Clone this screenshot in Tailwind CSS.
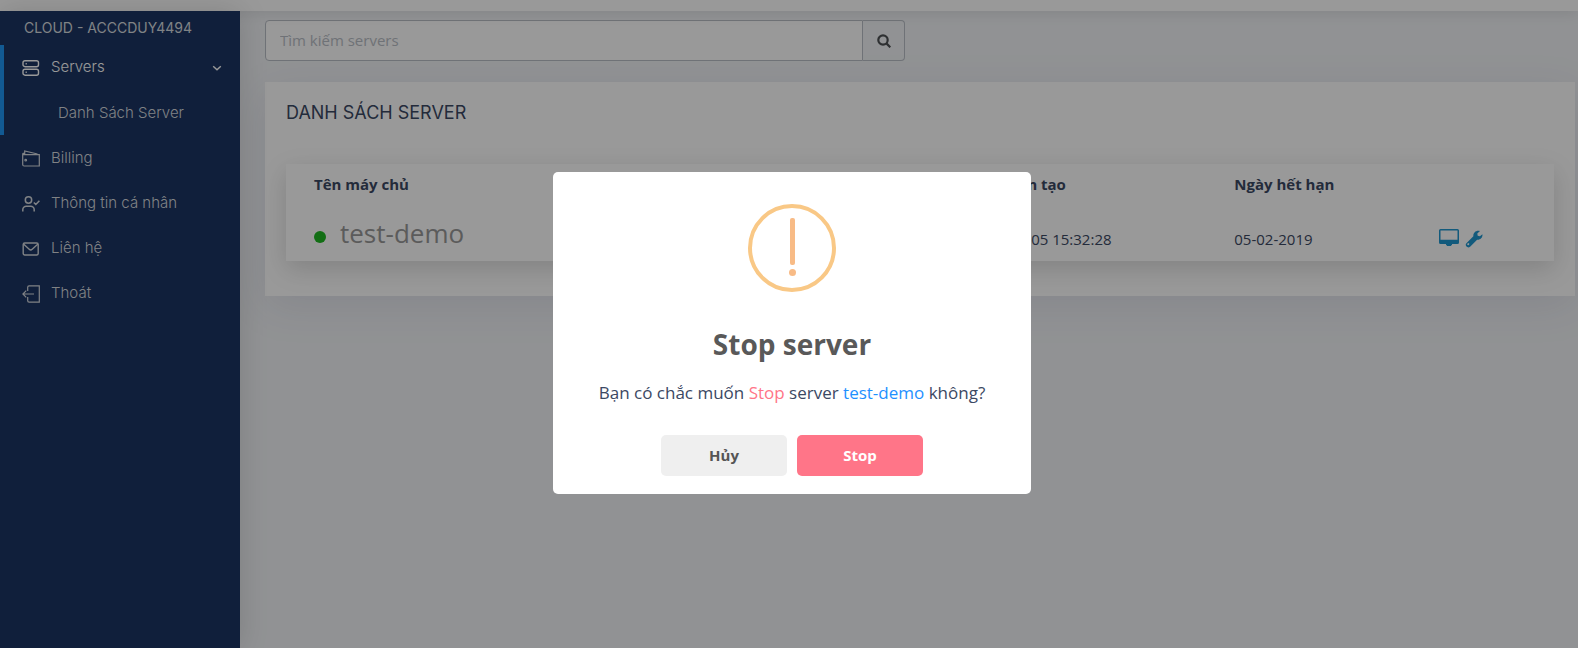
<!DOCTYPE html>
<html lang="vi">
<head>
<meta charset="utf-8">
<meta name="viewport" content="width=device-width, initial-scale=1">
<title>Danh sách server</title>
<script src="https://cdn.jsdelivr.net/npm/@tailwindcss/browser@4"></script>
</head>
<body class="flex min-h-screen flex-col bg-[#f2f4f7] font-['Open_Sans',sans-serif] text-[15px] text-[#3b4863]">
  <header class="z-20 h-[11px] bg-white shadow-[0_1px_15px_rgba(0,0,0,0.12)]"></header>
  <div class="flex grow">
    <aside class="z-30 w-60 shrink-0 bg-[#1c3563] font-[Inter,sans-serif] text-[#d5d9de] shadow-[0_0_28px_rgba(0,0,0,0.14)]">
      <h1 class="flex h-[34px] items-center pl-6 text-sm text-[#d5dade]">CLOUD - ACCCDUY4494</h1>
      <nav class="font-light">
        <div class="border-l-4 border-[#1f96f5]">
          <a href="#" class="flex h-[45px] items-center gap-[11px] pr-[18px] pl-[18px] text-white">
            <svg class="size-[18px]" viewBox="0 0 18 18" fill="none" stroke="currentColor" stroke-width="1.4"><rect x="1" y="1.7" width="15.5" height="6" rx="2"/><rect x="1" y="10.2" width="15.5" height="6" rx="2"/><path d="M3.600 4.700h1.200M3.600 13.200h1.200"/></svg>
            <span class="grow">Servers</span>
            <svg class="h-2.5 w-2.5" viewBox="0 0 10 10" fill="none" stroke="currentColor" stroke-width="1.4"><path d="M1.2 3.2 5 6.8l3.8-3.6"/></svg>
          </a>
          <a href="#" class="flex h-[45px] items-center pt-0.5 pl-[54px]">Danh Sách Server</a>
        </div>
        <a href="#" class="flex h-[45px] items-center gap-[11px] pt-0.5 pl-[22px]">
          <svg class="size-[18px]" viewBox="0 0 18 18" fill="none" stroke="currentColor" stroke-width="1.2"><path d="M.7 4.600h16.600v11.400H2.200a1.500 1.500 0 0 1-1.500-1.500V4.200C.7 3.400 1.500 3.100 2.500 3.100M2.700 4.500V1l12.800 3"/><circle cx="3.700" cy="10.200" r=".8"/></svg>
          <span>Billing</span>
        </a>
        <a href="#" class="flex h-[45px] items-center gap-[11px] pt-0.5 pl-[22px]">
          <svg class="size-[18px]" viewBox="0 0 18 18" fill="none" stroke="currentColor" stroke-width="1.5"><circle cx="6.500" cy="5" r="3.200"/><path d="M.8 16.500v-1.700a3.500 3.500 0 0 1 3.500-3.500h4.400a3.500 3.500 0 0 1 3.500 3.500v1.700M11.800 7.500l2 2 3.600-3.800"/></svg>
          <span>Thông tin cá nhân</span>
        </a>
        <a href="#" class="flex h-[45px] items-center gap-[11px] pt-0.5 pl-[22px]">
          <svg class="size-[18px]" viewBox="0 0 18 18" fill="none" stroke="currentColor" stroke-width="1.400"><rect x="1.200" y="3" width="15" height="12" rx="1.500"/><path d="m1.500 4 5.700 5.200a2.200 2.200 0 0 0 3 0L16 4"/></svg>
          <span>Liên hệ</span>
        </a>
        <a href="#" class="flex h-[45px] items-center gap-[11px] pt-0.5 pl-[22px]">
          <svg class="size-[18px]" viewBox="0 0 18 18" fill="none" stroke="currentColor" stroke-width="1.200"><path d="M5.700 6V2.200C5.700 1.300 6.200.8 7.100.8h10.200v16.400H7.100c-.9 0-1.400-.5-1.400-1.400V12M12 9H1M4.200 5.600.9 9l3.300 3.400"/></svg>
          <span>Thoát</span>
        </a>
      </nav>
    </aside>

    <main class="min-w-0 grow pt-[9px] pr-[3px] pl-[25px]">
      <form class="flex h-[41px] w-1/2 max-w-[640px]">
        <input type="text" aria-label="Tìm kiếm servers" placeholder="Tìm kiếm servers" class="min-w-0 grow rounded-l border border-[#babfc7] bg-white px-3.5 placeholder:text-[#b9bec6]">
        <button type="button" aria-label="Tìm kiếm" class="flex w-[42px] items-center justify-center rounded-r border border-l-0 border-[#babfc7] text-[#4e5154]">
          <svg class="size-3.5" viewBox="0 0 14 14" fill="none" stroke="currentColor" stroke-width="2.200"><circle cx="6" cy="6" r="4.700"/><path d="m9.400 9.400 3.900 3.900"/></svg>
        </button>
      </form>

      <section class="mt-[21px] bg-white px-[21px] pt-[19px] pb-[35px] shadow-[0_10px_40px_rgba(62,57,107,0.1)]">
        <h2 class="h-6 font-[Inter,sans-serif] text-lg leading-6 text-[#3b4863]">DANH SÁCH SERVER</h2>
        <div class="mt-[39px] h-[97px] shadow-[0_8px_24px_rgba(0,0,0,0.15)]">
          <table class="w-full table-fixed text-left">
            <colgroup><col class="w-[29%]"><col class="w-[24%]"><col class="w-[21%]"><col class="w-[16%]"><col></colgroup>
            <thead>
              <tr class="h-[41px] font-bold text-[#3b4863]">
                <th scope="col" class="p-0 pl-7">Tên máy chủ</th>
                <th scope="col" class="p-0">IP</th>
                <th scope="col" class="p-0 pl-1">Thời điểm tạo</th>
                <th scope="col" class="p-0 pl-2.5">Ngày hết hạn</th>
                <th class="p-0"></th>
              </tr>
            </thead>
            <tbody>
              <tr class="h-[56px]">
                <td class="p-0 pl-7">
                  <a href="#" class="flex items-center gap-3.5 text-[26px] leading-9 text-[#989898]"><span class="mt-2 size-3 rounded-full bg-[#1fb822]"></span>test-demo</a>
                </td>
                <td class="p-0"></td>
                <td class="p-0 pt-3 pl-3">2019-01-05 15:32:28</td>
                <td class="p-0 pt-3 pl-2.5">05-02-2019</td>
                <td class="p-0 pt-2.5">
                  <div class="flex gap-1.5 pl-3 text-[#1f96cf]">
                    <a href="#" aria-label="Console"><svg class="h-5 w-5" viewBox="0 0 20 20" fill="currentColor"><path fill-rule="evenodd" d="M1.500 1h17A1.500 1.500 0 0 1 20 2.500v12a1.500 1.500 0 0 1-1.500 1.500H13v1.200h-1V18H8v-.8H7V16H1.500A1.500 1.500 0 0 1 0 14.500v-12A1.500 1.500 0 0 1 1.500 1Zm0 1.500v9.300h17V2.500Z"/></svg></a>
                    <a href="#" aria-label="Cài đặt"><svg class="h-5 w-[18px]" viewBox="0 0 18 20" fill="currentColor"><path fill-rule="evenodd" d="M17.400 6.200c.5 3.100-2 5.900-5.300 5.500l-7 7c-2.400 2.200-5.800-1.100-3.700-3.500l7-7C7.800 4.800 11.200 1.600 15 3l-2.700 2.600.4 2.200 2.200.4ZM4.100 15.500a1 1 0 1 0-1.400 1.400 1 1 0 0 0 1.400-1.400Z"/></svg></a>
                  </div>
                </td>
              </tr>
            </tbody>
          </table>
        </div>
      </section>
    </main>
  </div>

  <div class="fixed inset-0 z-40 flex items-center justify-center bg-black/40 pt-[18px] pl-[6px]">
    <div role="dialog" aria-modal="true" aria-labelledby="dialog-title" class="flex w-[478px] max-w-full flex-col items-center rounded-[5px] bg-white pt-8 pb-[18px]">
      <svg class="size-[88px]" viewBox="0 0 88 88" fill="none"><circle cx="44" cy="44" r="42" stroke="#f9c886" stroke-width="4"/><rect x="42" y="14" width="5" height="47" rx="2" fill="#f8bb86"/><circle cx="44.500" cy="68.500" r="3.500" fill="#f8bb86"/></svg>
      <h2 id="dialog-title" class="mt-8 text-[28px] leading-10 font-bold text-[#595959]">Stop server</h2>
      <p class="mt-[17px] text-[17px] leading-6">Bạn có chắc muốn <span class="text-[#ff7588]">Stop</span> server <span class="text-[#1e90ff]">test-demo</span> không?</p>
      <div class="mt-[30px] flex gap-2.5 font-bold">
        <button type="button" class="h-[41px] w-[126px] rounded-[5px] bg-[#efefef] text-[#555]">Hủy</button>
        <button type="button" class="h-[41px] w-[126px] rounded-[5px] bg-[#ff7588] text-white">Stop</button>
      </div>
    </div>
  </div>
</body>
</html>
